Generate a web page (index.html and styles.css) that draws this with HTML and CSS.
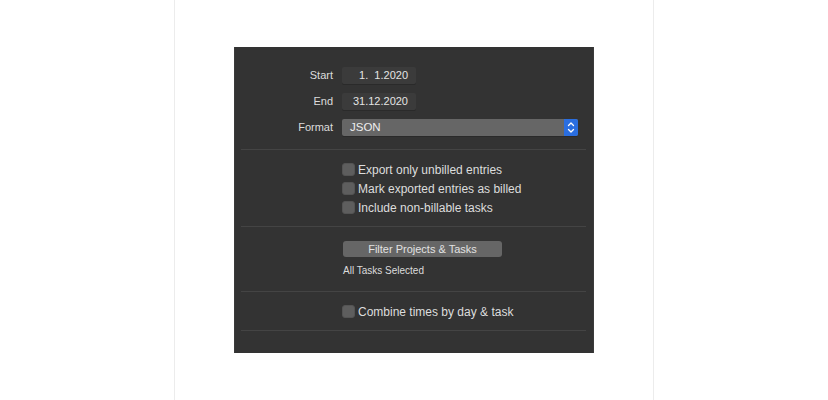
FILE: index.html
```
<!DOCTYPE html>
<html>
<head>
<meta charset="utf-8">
<link rel="stylesheet" href="styles.css">
</head>
<body>
<div class="page">
  <div class="panel">
    <div class="form">
      <div class="label">Start</div>
      <div class="datefield">1.  1.2020</div>
      <div class="label">End</div>
      <div class="datefield">31.12.2020</div>
      <div class="label">Format</div>
      <div class="popup">
        <span class="popup-text">JSON</span>
        <span class="stepper">
          <svg width="14" height="17" viewBox="0 0 14 17"><path d="M4.5 6.5 L7 4 L9.5 6.5" fill="none" stroke="#fff" stroke-width="1.3" stroke-linecap="round" stroke-linejoin="round"/><path d="M4.5 10.5 L7 13 L9.5 10.5" fill="none" stroke="#fff" stroke-width="1.3" stroke-linecap="round" stroke-linejoin="round"/></svg>
        </span>
      </div>
    </div>
    <div class="sep"></div>
    <div class="checks">
      <div class="check"><span class="box"></span><span>Export only unbilled entries</span></div>
      <div class="check"><span class="box"></span><span>Mark exported entries as billed</span></div>
      <div class="check"><span class="box"></span><span>Include non-billable tasks</span></div>
    </div>
    <div class="sep"></div>
    <div class="filter">
      <div class="button">Filter Projects &amp; Tasks</div>
      <div class="note">All Tasks Selected</div>
    </div>
    <div class="sep"></div>
    <div class="checks">
      <div class="check"><span class="box"></span><span>Combine times by day &amp; task</span></div>
    </div>
    <div class="sep"></div>
  </div>
</div>
</body>
</html>
```

FILE: styles.css
```
html, body {
  margin: 0;
  padding: 0;
  background: #ffffff;
  font-family: "Liberation Sans", Arial, sans-serif;
}

.page {
  width: 478px;
  height: 400px;
  margin: 0 auto;
  border-left: 1px solid #ececec;
  border-right: 1px solid #ececec;
  overflow: hidden;
}

.panel {
  width: 360px;
  height: 306px;
  margin: 47px auto 0;
  background: #333333;
  box-sizing: border-box;
  padding-top: 20px;
  border-left: 1px solid #3b3b3b;
  border-right: 1px solid #3b3b3b;
}

.form {
  display: grid;
  grid-template-columns: 98px 1fr;
  grid-template-rows: 17px 17px 17px;
  column-gap: 9px;
  row-gap: 9px;
  padding-right: 15px;
  margin-bottom: 13px;
}

.label {
  font-size: 11px;
  color: #dcdcdc;
  text-align: right;
  line-height: 17px;
}

.datefield {
  width: 74px;
  height: 17px;
  box-sizing: border-box;
  background: #3b3b3b;
  border-radius: 2px;
  box-shadow: 0 1px 0 #2a2a2a;
  color: #e4e4e4;
  font-size: 11px;
  line-height: 17px;
  text-align: right;
  padding-right: 8px;
  white-space: pre;
}

.popup {
  display: flex;
  align-items: stretch;
  height: 17px;
  background: #666666;
  border-radius: 2px;
  box-shadow: 0 1px 0 #2a2a2a;
}

.popup-text {
  flex: 1;
  color: #eeeeee;
  font-size: 11.5px;
  line-height: 17px;
  padding-left: 8px;
}

.stepper {
  width: 14px;
  background: #2a6ee0;
  border-radius: 0 2px 2px 0;
  display: flex;
}

.sep {
  height: 1px;
  background: #444444;
  margin: 0 7px 0 6px;
}

.checks {
  display: flex;
  flex-direction: column;
  gap: 6px;
  padding: 13px 0 12px 107px;
}

.check {
  display: flex;
  align-items: center;
  gap: 3px;
  height: 13px;
  font-size: 12px;
  color: #dddddd;
}

.box {
  width: 13px;
  height: 13px;
  box-sizing: border-box;
  border-radius: 3px;
  background: #5e5e5e;
  border: 1px solid #545454;
  flex: none;
}

.filter {
  padding: 14px 0 14px 108px;
}

.button {
  width: 159px;
  height: 16px;
  background: #666666;
  border-radius: 3px;
  color: #e2e2e2;
  font-size: 11px;
  line-height: 16px;
  text-align: center;
}

.note {
  margin-top: 8px;
  height: 12px;
  line-height: 12px;
  font-size: 10px;
  color: #dcdcdc;
}
```
